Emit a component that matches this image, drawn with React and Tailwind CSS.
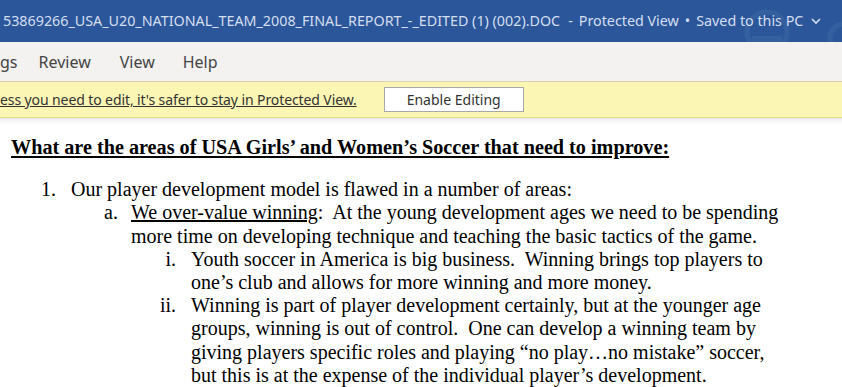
import React from 'react';

const ui = { fontFamily: '"Noto Sans", "Open Sans", sans-serif' };
const serif = { fontFamily: '"Liberation Serif", "Times New Roman", serif' };

const items = [
  {
    mark: 'a.',
    level: 2,
    lines: [
      [<span key="u" className="underline">We over-value winning</span>, ':  At the young development ages we need to be spending'],
      ['more time on developing technique and teaching the basic tactics of the game.'],
    ],
  },
  {
    mark: 'i.',
    level: 3,
    lines: [
      ['Youth soccer in America is big business.  Winning brings top players to'],
      ['one\u2019s club and allows for more winning and more money.'],
    ],
  },
  {
    mark: 'ii.',
    level: 3,
    lines: [
      ['Winning is part of player development certainly, but at the younger age'],
      ['groups, winning is out of control.  One can develop a winning team by'],
      ['giving players specific roles and playing \u201cno play\u2026no mistake\u201d soccer,'],
      ['but this is at the expense of the individual player\u2019s development.'],
    ],
  },
];

const markWidth = { 1: 'w-[56px]', 2: 'w-[118px]', 3: 'w-[176px]' };
const markGap = { 1: 'w-[15px]', 2: 'w-[13px]', 3: 'w-[15px]' };

function ListItem({ mark, level, lines }) {
  return (
    <div className="flex">
      <div className={`${markWidth[level]} text-right shrink-0`}>{mark}</div>
      <div className={`${markGap[level]} shrink-0`} />
      <div className="whitespace-pre">
        {lines.map((l, i) => (
          <div key={i}>{l}</div>
        ))}
      </div>
    </div>
  );
}

export default function App() {
  return (
    <div className="w-[842px] h-[387px] overflow-hidden bg-white flex flex-col">
      {/* title bar */}
      <div className="relative h-[42px] shrink-0 bg-[#2b579a] flex items-center pl-[3px] text-[14.3px] text-[#d5def0] whitespace-pre" style={ui}>
        <svg className="absolute right-0 top-0" width="110" height="42" viewBox="0 0 110 42">
          <circle cx="35" cy="32" r="20" fill="none" stroke="#35609f" strokeWidth="5" />
          <circle cx="112" cy="38" r="14" fill="none" stroke="#35609f" strokeWidth="5" />
          <rect x="20" y="36" width="30" height="8" fill="#35609f" />
        </svg>
        <span className="relative">53869266_USA_U20_NATIONAL_TEAM_2008_FINAL_REPORT_-_EDITED (1) (002).DOC</span>
        <span className="relative ml-[8px]">-</span>
        <span className="relative ml-[6px]">Protected View</span>
        <span className="relative ml-[6px]">•</span>
        <span className="relative ml-[6px]">Saved to this PC</span>
        <svg className="relative ml-[7px]" width="12" height="12" viewBox="0 0 12 12">
          <path d="M2 4 L6 8 L10 4" fill="none" stroke="#d5def0" strokeWidth="1.6" />
        </svg>
      </div>

      {/* ribbon tabs */}
      <div className="h-[39px] shrink-0 bg-[#f3f2f1] flex items-center text-[16px] text-[#444]" style={ui}>
        <span>gs</span>
        <span className="ml-[21px]">Review</span>
        <span className="ml-[29px]">View</span>
        <span className="ml-[28px]">Help</span>
      </div>

      {/* protected view banner */}
      <div className="h-[37px] shrink-0 bg-[#fcf6b5] border-t border-t-[#d7d3b4] border-b border-b-[#e2d88a] flex items-center text-[14px] text-[#333]" style={ui}>
        <span className="underline tracking-[-0.1px]">ess you need to edit, it&apos;s safer to stay in Protected View.</span>
        <button className="ml-[27px] h-[25px] w-[140px] bg-white border border-[#a8a8a8] text-[14px] text-[#333]">Enable Editing</button>
      </div>
      <div className="h-[6px] shrink-0 bg-gradient-to-b from-[#ebebeb] to-white" />

      {/* document */}
      <div className="flex-1 text-[20px] leading-[23.2px] text-black pt-[12px]" style={serif}>
        <div className="pl-[11px] font-bold underline text-[20.2px]">What are the areas of USA Girls’ and Women’s Soccer that need to improve:</div>
        <div className="mt-[19px]">
          <ListItem mark="1." level={1} lines={[['Our player development model is flawed in a number of areas:']]} />
          {items.map((it) => (
            <ListItem key={it.mark} {...it} />
          ))}
        </div>
      </div>
    </div>
  );
}
